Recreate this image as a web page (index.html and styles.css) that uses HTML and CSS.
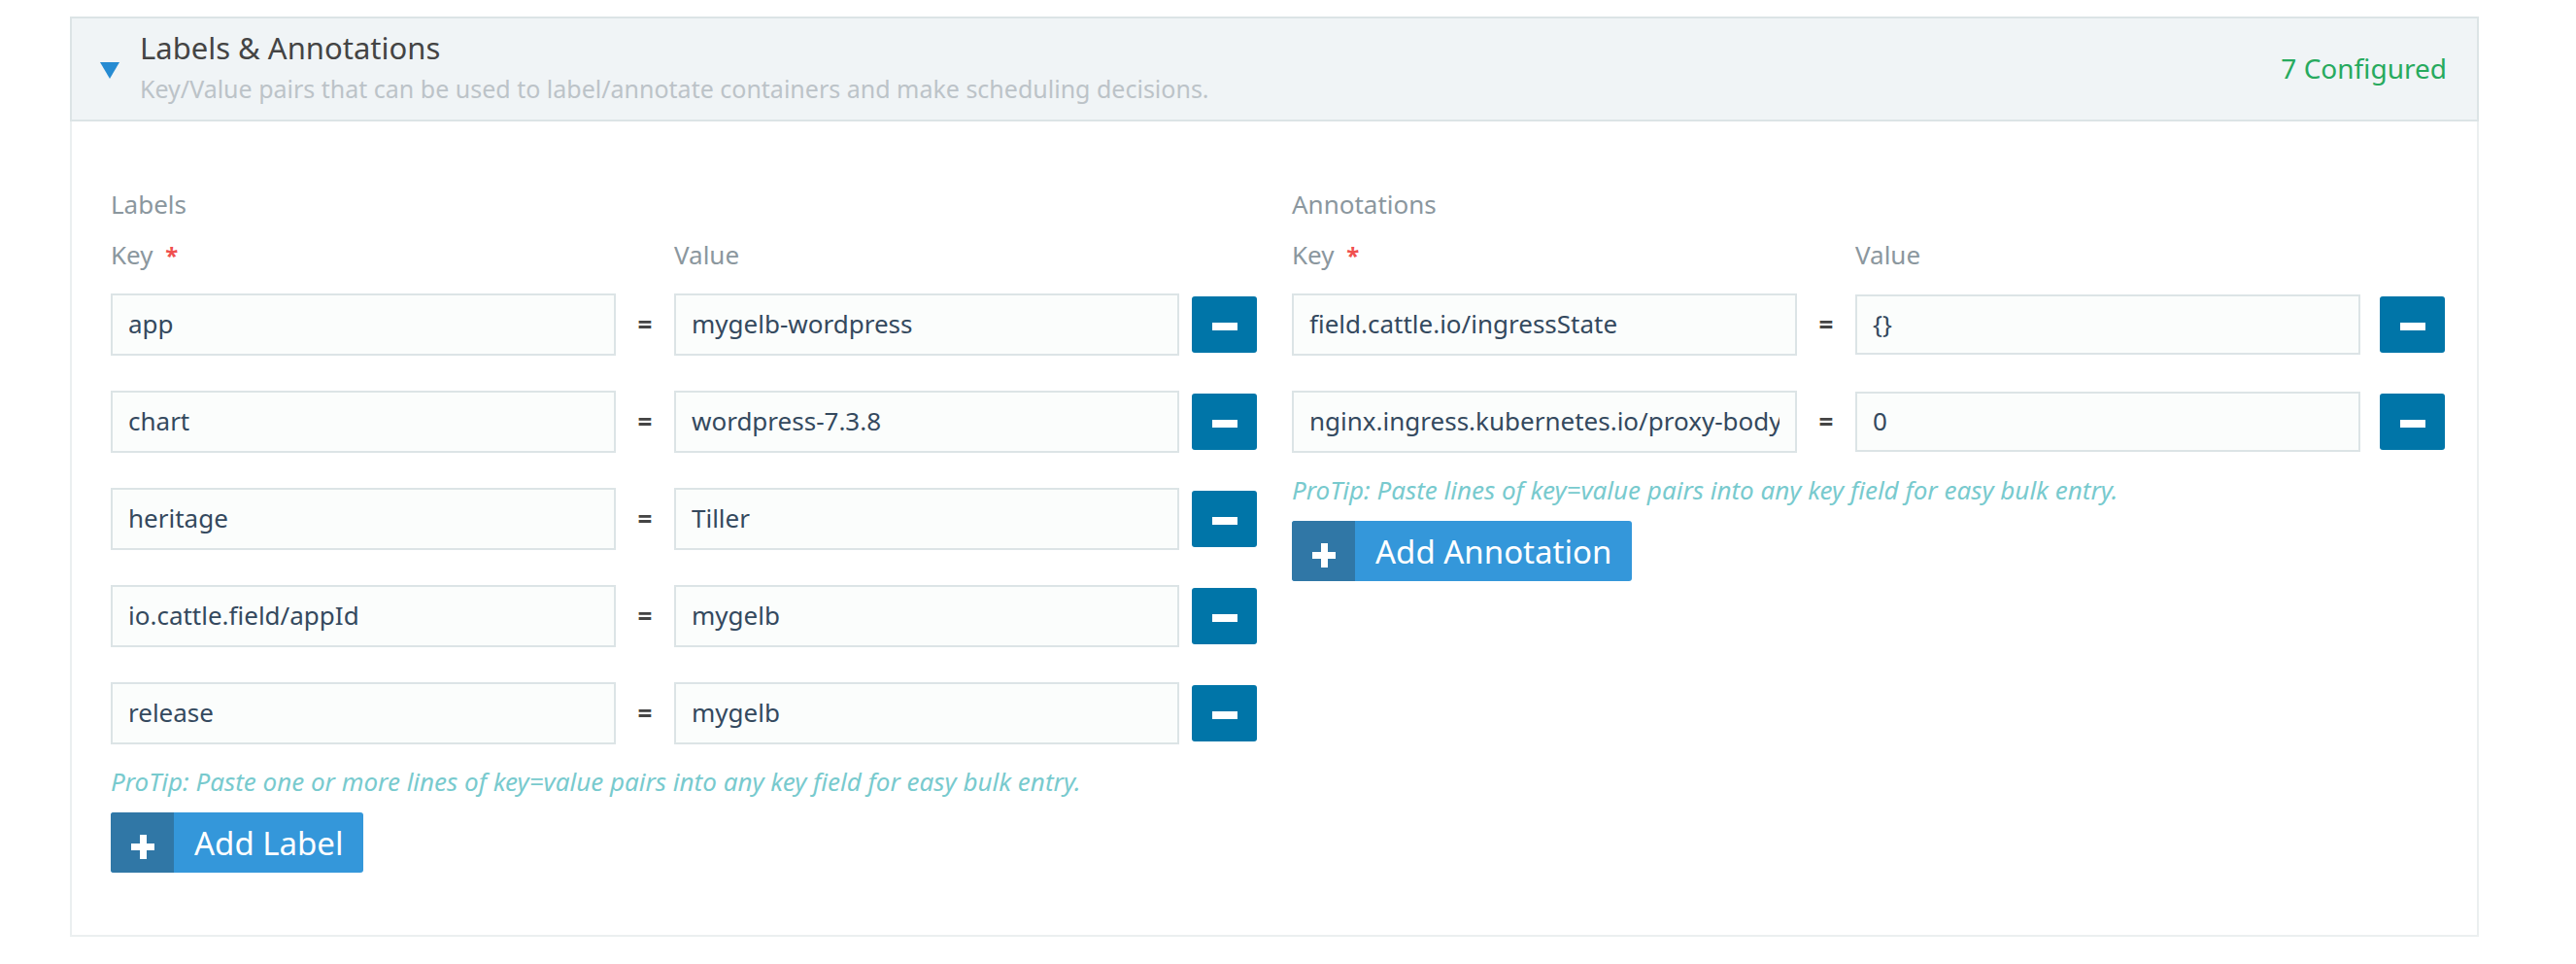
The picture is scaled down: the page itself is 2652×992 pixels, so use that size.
FILE: index.html
```html
<!DOCTYPE html>
<html lang="en">
<head>
<meta charset="utf-8">
<title>Labels &amp; Annotations</title>
<link rel="stylesheet" href="styles.css">
</head>
<body>
<section class="panel">
  <header class="panel-header">
    <button class="toggle" type="button" aria-expanded="true" aria-label="Collapse section">
      <svg class="caret" viewBox="0 0 20 17" aria-hidden="true"><path d="M0 0h20L10 17z"/></svg>
    </button>
    <div class="heading">
      <h2 class="title">Labels &amp; Annotations</h2>
      <p class="subtitle">Key/Value pairs that can be used to label/annotate containers and make scheduling decisions.</p>
    </div>
    <span class="status">7 Configured</span>
  </header>
  <div class="panel-body">
    <div class="group labels">
      <h3 class="caption">Labels</h3>
      <div class="row head">
        <span class="caption" id="label-key">Key <b class="required">*</b></span>
        <span></span>
        <span class="caption" id="label-value">Value</span>
      </div>
      <div class="rows">
        <div class="row">
          <input class="field" type="text" value="app" aria-labelledby="label-key"><span class="equals">=</span><input class="field" type="text" value="mygelb-wordpress" aria-labelledby="label-value">
          <button class="remove" type="button" aria-label="Remove label"><svg class="minus" viewBox="0 0 26 8" aria-hidden="true"><path d="M0 0h26v8H0z"/></svg></button>
        </div>
        <div class="row">
          <input class="field" type="text" value="chart" aria-labelledby="label-key"><span class="equals">=</span><input class="field" type="text" value="wordpress-7.3.8" aria-labelledby="label-value">
          <button class="remove" type="button" aria-label="Remove label"><svg class="minus" viewBox="0 0 26 8" aria-hidden="true"><path d="M0 0h26v8H0z"/></svg></button>
        </div>
        <div class="row">
          <input class="field" type="text" value="heritage" aria-labelledby="label-key"><span class="equals">=</span><input class="field" type="text" value="Tiller" aria-labelledby="label-value">
          <button class="remove" type="button" aria-label="Remove label"><svg class="minus" viewBox="0 0 26 8" aria-hidden="true"><path d="M0 0h26v8H0z"/></svg></button>
        </div>
        <div class="row">
          <input class="field" type="text" value="io.cattle.field/appId" aria-labelledby="label-key"><span class="equals">=</span><input class="field" type="text" value="mygelb" aria-labelledby="label-value">
          <button class="remove" type="button" aria-label="Remove label"><svg class="minus" viewBox="0 0 26 8" aria-hidden="true"><path d="M0 0h26v8H0z"/></svg></button>
        </div>
        <div class="row">
          <input class="field" type="text" value="release" aria-labelledby="label-key"><span class="equals">=</span><input class="field" type="text" value="mygelb" aria-labelledby="label-value">
          <button class="remove" type="button" aria-label="Remove label"><svg class="minus" viewBox="0 0 26 8" aria-hidden="true"><path d="M0 0h26v8H0z"/></svg></button>
        </div>
      </div>
      <p class="tip">ProTip: Paste one or more lines of key=value pairs into any key field for easy bulk entry.</p>
      <button class="add" type="button"><span class="add-icon"><svg class="plus" viewBox="0 0 24 25" aria-hidden="true"><path d="M9 0h7v9h8v7h-8v9H9v-9H0V9h9z"/></svg></span><span class="add-text">Add Label</span></button>
    </div>
    <div class="group annotations">
      <h3 class="caption">Annotations</h3>
      <div class="row head">
        <span class="caption" id="annotation-key">Key <b class="required">*</b></span>
        <span></span>
        <span class="caption" id="annotation-value">Value</span>
      </div>
      <div class="rows">
        <div class="row">
          <input class="field" type="text" value="field.cattle.io/ingressState" aria-labelledby="annotation-key"><span class="equals">=</span><textarea class="field area" rows="1" aria-labelledby="annotation-value">{}</textarea>
          <button class="remove" type="button" aria-label="Remove annotation"><svg class="minus" viewBox="0 0 26 8" aria-hidden="true"><path d="M0 0h26v8H0z"/></svg></button>
        </div>
        <div class="row">
          <input class="field" type="text" value="nginx.ingress.kubernetes.io/proxy-body-size" aria-labelledby="annotation-key"><span class="equals">=</span><textarea class="field area" rows="1" aria-labelledby="annotation-value">0</textarea>
          <button class="remove" type="button" aria-label="Remove annotation"><svg class="minus" viewBox="0 0 26 8" aria-hidden="true"><path d="M0 0h26v8H0z"/></svg></button>
        </div>
      </div>
      <p class="tip">ProTip: Paste lines of key=value pairs into any key field for easy bulk entry.</p>
      <button class="add" type="button"><span class="add-icon"><svg class="plus" viewBox="0 0 24 25" aria-hidden="true"><path d="M9 0h7v9h8v7h-8v9H9v-9H0V9h9z"/></svg></span><span class="add-text">Add Annotation</span></button>
    </div>
  </div>
</section>
</body>
</html>
```
FILE: styles.css
```css
* {
  box-sizing: border-box;
}

body {
  margin: 0;
  padding: 17px 100px 28px 72px;
  background: #fff;
  color: #444;
  font-family: "Noto Sans", "Open Sans", sans-serif;
  font-size: 26px;
}

h2,
h3,
p {
  margin: 0;
  font-weight: 400;
}

button,
input,
textarea {
  font: inherit;
}

button {
  border: 0;
  padding: 0;
  cursor: pointer;
}

.panel {
  border: 2px solid #ebeff0;
  border-top: 0;
}

.panel-header {
  display: flex;
  align-items: center;
  margin: 0 -2px;
  padding: 10px 31px 12px 29px;
  border: 2px solid #dce4e6;
  background: #f0f4f6;
}

.toggle {
  display: flex;
  margin-right: 21px;
  padding-top: 4px;
  background: none;
}

.caret {
  width: 20px;
  height: 17px;
  fill: #268bd2;
}

.heading {
  flex: 1;
}

.title {
  font-size: 31px;
  line-height: 40px;
}

.subtitle {
  margin-top: 2px;
  color: #bcc3c8;
  font-size: 25px;
  line-height: 40px;
}

.status {
  color: #27aa5e;
  font-size: 28px;
  line-height: 40px;
}

.panel-body {
  display: grid;
  grid-template-columns: 1180fr 1187fr;
  align-items: start;
  gap: 36px;
  padding: 59px 33px 64px 40px;
}

.row {
  display: grid;
  grid-template-columns: minmax(0, 1fr) 60px minmax(0, 1fr) 80px;
  align-items: center;
}

.annotations .row {
  grid-template-columns: minmax(0, 1fr) 60px minmax(0, 1fr) 87px;
}

.head {
  margin-bottom: 14px;
}

.caption {
  color: #8b979e;
  font-size: 26px;
  line-height: 52px;
}

.required {
  margin-left: 6px;
  color: #f0504f;
  font-size: 24px;
  line-height: 1;
}

.rows {
  display: grid;
  gap: 36px;
}

.field {
  width: 100%;
  height: 64px;
  padding: 0 16px 2px;
  border: 2px solid #dce4e6;
  border-radius: 0;
  background: #fbfdfc;
  color: #34495e;
}

.area {
  height: 62px;
  padding-top: 10px;
  line-height: 36px;
  resize: none;
  overflow: hidden;
}

.equals {
  text-align: center;
  font-weight: 700;
}

.remove {
  display: flex;
  align-items: center;
  justify-content: center;
  justify-self: end;
  width: 67px;
  height: 58px;
  padding-top: 4px;
  border-radius: 3px;
  background: #0075a8;
}

.minus {
  width: 26px;
  height: 8px;
  fill: #fff;
}

.tip {
  margin: 18px 0 12px;
  color: #78cace;
  font-size: 26px;
  font-style: italic;
  line-height: 40px;
}

.add {
  display: inline-flex;
  height: 62px;
  border-radius: 3px;
  overflow: hidden;
  background: #3497da;
  color: #fff;
  font-size: 33px;
  line-height: 64px;
}

.add-icon {
  display: flex;
  align-items: center;
  justify-content: center;
  width: 65px;
  padding-top: 8px;
  background: #3077a6;
}

.plus {
  width: 24px;
  height: 25px;
  fill: #fff;
}

.add-text {
  padding: 0 21px;
}
```
